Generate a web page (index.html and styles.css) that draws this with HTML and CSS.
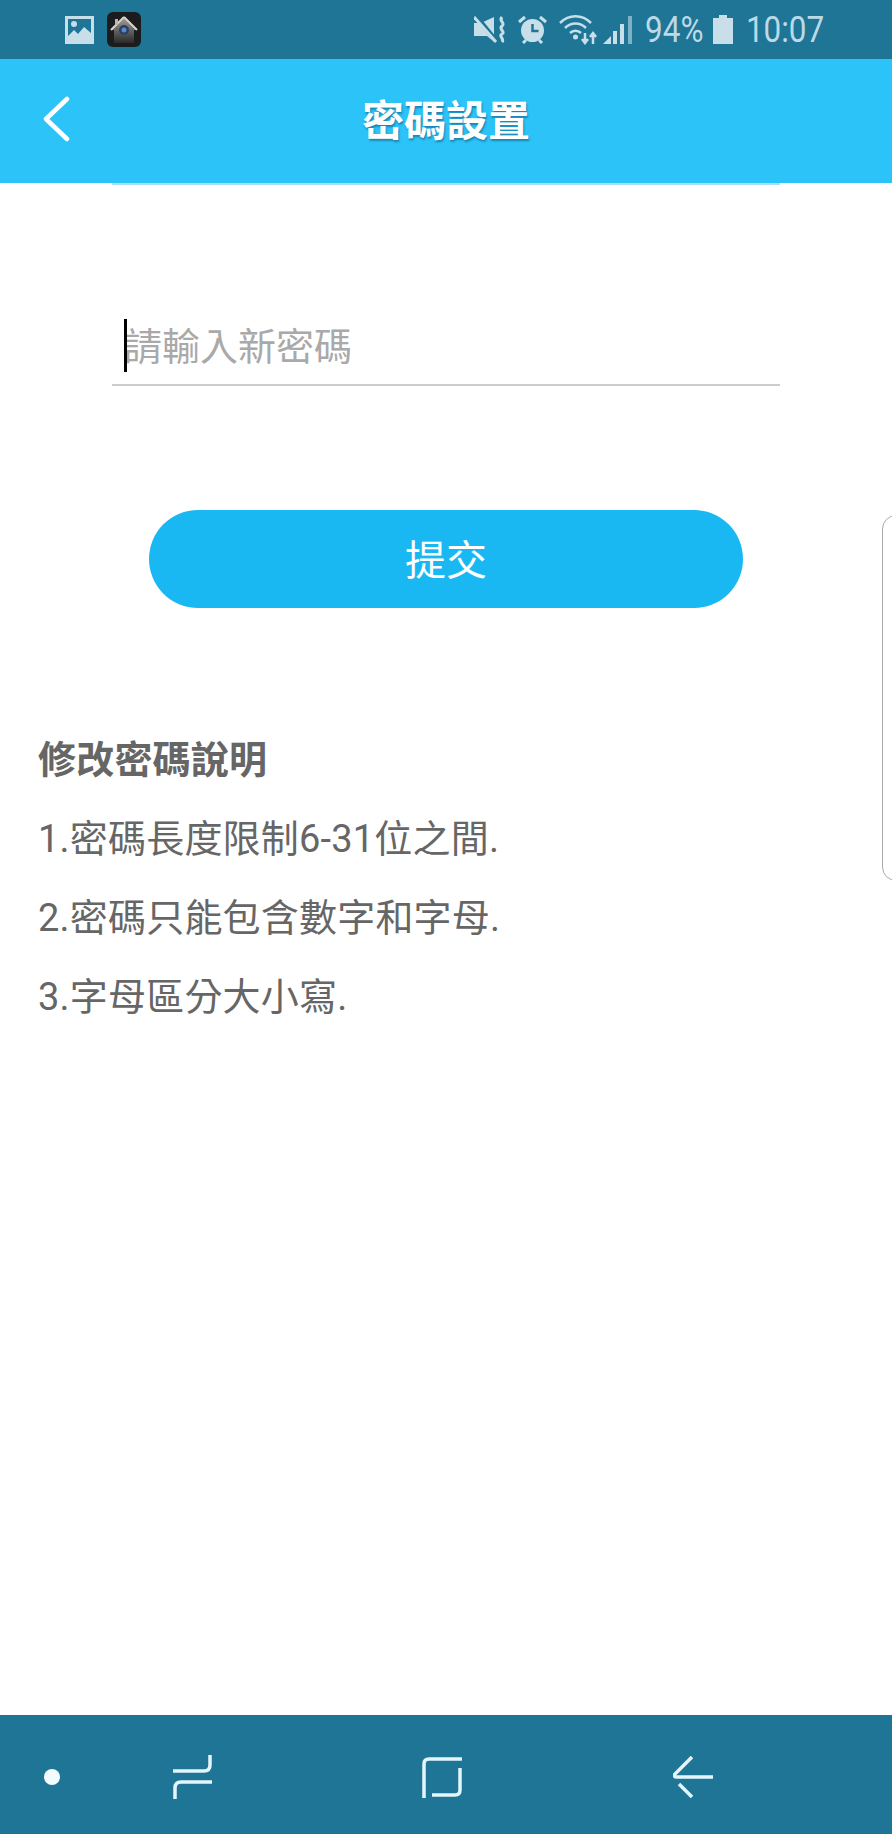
FILE: index.html
```html
<!DOCTYPE html>
<html>

<head>
	<meta charset="UTF-8">
	<title>密碼設置</title>
	<link rel="stylesheet" href="styles.css">
</head>

<body>
	<div id="status">
		<div class="statusLeft">
			<svg class="icoPicture" width="29" height="28" viewBox="0 0 29 28">
				<path fill="#c8dfe9" fill-rule="evenodd" d="M0 0h29v28H0zM3 3v17l6-6 4 4 6-7 7 6V3z" />
				<circle cx="9" cy="8" r="3" fill="#c8dfe9" />
			</svg>
			<svg class="icoApp" width="34" height="35" viewBox="0 0 34 35">
				<defs>
					<linearGradient id="roof" x1="0" y1="0" x2="0" y2="1">
						<stop offset="0" stop-color="#a5a29c" />
						<stop offset="1" stop-color="#2a2a2a" />
					</linearGradient>
				</defs>
				<rect width="34" height="35" rx="6" fill="#1a1c1e" />
				<path d="M17 5 4 18h3v13h20V18h3z" fill="url(#roof)" />
				<path d="M17 5 4 18M17 5l13 13" stroke="#d6d3cc" stroke-width="2" fill="none" />
				<rect x="8" y="7" width="3" height="6" fill="#b9b6ae" />
				<circle cx="17" cy="18" r="5" fill="#2a3f63" />
				<circle cx="17" cy="18" r="2.500" fill="#5d86c4" />
			</svg>
		</div>
		<div class="statusRight">
			<!-- 静音振动 -->
			<svg class="icoMute" width="33" height="29" viewBox="0 0 33 29">
				<path fill="#c8dfe9" d="M0 8h7l13-6v25L13 21H0z" />
				<path d="M1 0l22 27" stroke="#1e7595" stroke-width="5" />
				<path d="M0 2l22 25" stroke="#c8dfe9" stroke-width="3" />
				<path d="M28 2c-4 4 4 6 0 9s4 6 0 8 3 5 0 8" stroke="#c8dfe9" stroke-width="3" fill="none" />
			</svg>
			<!-- 闹钟 -->
			<svg class="icoAlarm" width="29" height="29" viewBox="0 0 29 29">
				<circle cx="14.500" cy="15.500" r="11.500" fill="#c8dfe9" />
				<path d="M14.500 9v7h6" stroke="#1e7595" stroke-width="2.500" fill="none" />
				<path d="M1 7l6-5M28 7l-6-5M5 28l3-3M24 28l-3-3" stroke="#c8dfe9" stroke-width="3" fill="none" />
			</svg>
			<!-- wifi -->
			<svg class="icoWifi" width="39" height="30" viewBox="0 0 39 30">
				<g fill="none" stroke="#c8dfe9" stroke-width="2.500">
					<path d="M1 8c9-9 22-9 31 0" />
					<path d="M6 13c6-6 15-6 21 0" />
					<path d="M11 18c3-3 8-3 11 0" />
				</g>
				<circle cx="16.500" cy="22" r="2.500" fill="#c8dfe9" />
				<path d="M26 18v8M23 24l3 4 3-4M34 29v-9M31 22l3-4 3 4" stroke="#c8dfe9" stroke-width="2.500" fill="none" />
			</svg>
			<!-- 信号 -->
			<svg class="icoSignal" width="30" height="28" viewBox="0 0 30 28">
				<path d="M0 28l8-8v8z" fill="#c8dfe9" />
				<rect x="10" y="15" width="4" height="13" fill="#c8dfe9" />
				<rect x="17" y="8" width="4" height="20" fill="#c8dfe9" />
				<rect x="25" y="0" width="4" height="28" fill="#7fb1c6" />
			</svg>
			<span class="statusText percent">94%</span>
			<svg class="icoBattery" width="20" height="29" viewBox="0 0 20 29">
				<path fill="#c8dfe9" d="M6 0h8v3h6v26H0V3h6z" />
			</svg>
			<span class="statusText clock">10:07</span>
		</div>
	</div>

	<div id="header">
		<a class="goback" href="javascript:;">
			<svg width="30" height="46" viewBox="0 0 30 46">
				<path d="M26 3 5 23l21 20" stroke="#fff" stroke-width="4.500" fill="none" stroke-linecap="round" stroke-linejoin="round" />
			</svg>
		</a>
		<h1>密碼設置</h1>
	</div>

	<div id="content">
		<div class="form">
			<div class="oldLine"></div>
			<div class="field">
				<i class="caret"></i>
				<span class="placeholder">請輸入新密碼</span>
			</div>
		</div>
		<a class="submit" href="javascript:;">提交</a>
		<dl class="notes">
			<dt>修改密碼說明</dt>
			<dd>1.密碼長度限制6-31位之間.</dd>
			<dd>2.密碼只能包含數字和字母.</dd>
			<dd>3.字母區分大小寫.</dd>
		</dl>
		<div class="edgePanel"></div>
	</div>

	<div id="navbar">
		<span class="navDot"></span>
		<svg class="navRecent" width="40" height="44" viewBox="0 0 40 44">
			<path d="M37 0v10q0 6-6 6H0M39 27H8q-6 0-6 6v11" stroke="#e4f6fb" stroke-width="3.500" fill="none" />
		</svg>
		<svg class="navHome" width="40" height="42" viewBox="0 0 40 42">
			<path d="M2 41V7q0-5 5-5h33M38 11v22q0 5-5 5H10" stroke="#e4f6fb" stroke-width="3.500" fill="none" />
		</svg>
		<svg class="navBack" width="40" height="42" viewBox="0 0 40 42">
			<path d="M19 1 2 18q-2 3 2 3h36M6 28l13 13" stroke="#e4f6fb" stroke-width="3.500" fill="none" />
		</svg>
	</div>
</body>

</html>
```

FILE: styles.css
```css
html,
body {
	width: 100%;
	height: 100%;
	margin: 0;
}

body {
	display: flex;
	flex-direction: column;
	overflow: hidden;
	background: #fff;
	color: #666;
	font-family: "Roboto", "Noto Sans CJK TC", sans-serif;
}

dl,
dd,
h1 {
	margin: 0;
	padding: 0;
}

a {
	text-decoration: none;
}

#status {
	height: 59px;
	flex: none;
	display: flex;
	justify-content: space-between;
	align-items: center;
	padding: 0 68px 0 65px;
	background: #1e7595;
}

.statusLeft {
	display: flex;
	align-items: center;
	gap: 13px;
}

.statusRight {
	display: flex;
	align-items: center;
}

.icoAlarm {
	margin-left: 11px;
}

.icoWifi {
	margin-left: 12px;
}

.icoSignal {
	margin-left: 5px;
}

.percent {
	margin-left: 12px;
}

.icoBattery {
	margin-left: 10px;
}

.clock {
	margin-left: 13px;
}

.statusText {
	display: inline-block;
	font: 37px/59px "Roboto", sans-serif;
	color: #bcd9e6;
	transform: scaleX(.85);
}

.percent {
	width: 58px;
	text-indent: -5px;
}

.clock {
	width: 78px;
	text-indent: -7px;
}

#header {
	height: 124px;
	flex: none;
	display: flex;
	align-items: center;
	justify-content: center;
	position: relative;
	background: #2cc3f8;
}

.goback {
	position: absolute;
	left: 41px;
	top: 37px;
	line-height: 0;
}

#header h1 {
	font-size: 42px;
	height: 124px;
	line-height: 126px;
	font-weight: 700;
	color: #fff;
	text-shadow: 1px 2px 2px rgba(0, 60, 90, .45);
}

#content {
	flex: 1;
	position: relative;
}

.form {
	padding: 0 112px;
}

.oldLine {
	height: 2px;
	background: #a9dff5;
}

.field {
	position: relative;
	height: 66px;
	margin-top: 113px;
	padding: 20px 0 0 12px;
	border-bottom: 2px solid #ccc;
}

.placeholder {
	font-size: 38px;
	line-height: 58px;
	color: #a9a9a9;
}

.caret {
	position: absolute;
	left: 12px;
	top: 21px;
	width: 3px;
	height: 53px;
	background: #000;
}

.submit {
	display: block;
	width: 594px;
	height: 98px;
	margin: 124px auto 0 149px;
	border-radius: 49px;
	background: #1ab8f3;
	color: #fff;
	font-size: 41px;
	line-height: 102px;
	text-align: center;
}

.notes {
	margin-top: 113px;
	padding-left: 38px;
	font-size: 38px;
	line-height: 79px;
	letter-spacing: .2px;
	color: #666;
}

.notes dt {
	font-weight: 700;
}

.edgePanel {
	position: absolute;
	right: -20px;
	top: 332px;
	width: 30px;
	height: 366px;
	box-sizing: border-box;
	border: 1px solid #aaa;
	border-radius: 14px 0 0 14px;
}

#navbar {
	height: 119px;
	flex: none;
	position: relative;
	background: #1e7595;
}

#navbar svg,
.navDot {
	position: absolute;
}

.navDot {
	left: 44px;
	top: 54px;
	width: 16px;
	height: 16px;
	border-radius: 50%;
	background: #f2fbfd;
}

.navRecent {
	left: 173px;
	top: 40px;
}

.navHome {
	left: 422px;
	top: 42px;
}

.navBack {
	left: 673px;
	top: 41px;
}
```
